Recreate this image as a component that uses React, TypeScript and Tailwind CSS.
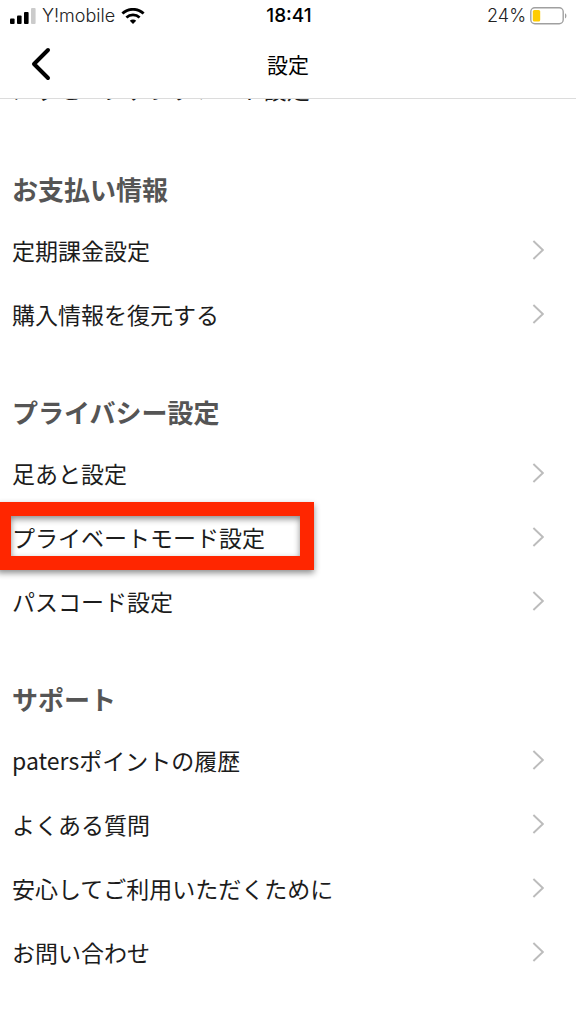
interface SettingItem {
  label: string;
  highlighted?: boolean;
}

interface SettingSection {
  title: string;
  items: SettingItem[];
}

const sections: SettingSection[] = [
  {
    title: "お支払い情報",
    items: [{ label: "定期課金設定" }, { label: "購入情報を復元する" }],
  },
  {
    title: "プライバシー設定",
    items: [
      { label: "足あと設定" },
      { label: "プライベートモード設定", highlighted: true },
      { label: "パスコード設定" },
    ],
  },
  {
    title: "サポート",
    items: [
      { label: "patersポイントの履歴" },
      { label: "よくある質問" },
      { label: "安心してご利用いただくために" },
      { label: "お問い合わせ" },
    ],
  },
];

function SignalIcon() {
  return (
    <svg width="26" height="17" viewBox="0 0 26 17" aria-hidden="true">
      <rect x="0" y="10.5" width="4.6" height="5.5" rx="1" />
      <rect x="7" y="7.5" width="4.6" height="8.5" rx="1" />
      <rect x="14" y="4" width="4.6" height="12" rx="1" />
      <rect x="21" y="0" width="4.6" height="16" rx="1" fill="#cbcbcb" />
    </svg>
  );
}

function WifiIcon() {
  return (
    <svg width="24" height="17" viewBox="0 0 24 17" fill="none" aria-hidden="true">
      <path d="M1.4 5.6a15.2 15.2 0 0 1 21.2 0" stroke="#000" strokeWidth="2.8" />
      <path d="M5.4 9.6a9.6 9.6 0 0 1 13.2 0" stroke="#000" strokeWidth="2.7" />
      <path d="M12 16 8.8 12.8a4.6 4.6 0 0 1 6.4 0z" fill="#000" />
    </svg>
  );
}

function BatteryIcon() {
  return (
    <svg width="38" height="18" viewBox="0 0 38 18" fill="none" aria-hidden="true">
      <rect x="0.8" y="0.8" width="32.4" height="16" rx="4" stroke="#a0a0a0" strokeWidth="1.4" />
      <rect x="2.8" y="3" width="7.4" height="11.6" rx="1.6" fill="#ffcc00" />
      <path d="M35 6.2c1.9.8 1.9 4.4 0 5.2z" fill="#a0a0a0" />
    </svg>
  );
}

function ChevronIcon() {
  return (
    <svg width="12" height="20" viewBox="0 0 12 20" fill="none" aria-hidden="true">
      <path d="M1.4 1l9.4 9-9.4 9" stroke="#bcbcbc" strokeWidth="1.9" />
    </svg>
  );
}

function SettingRow({ label, highlighted }: SettingItem) {
  return (
    <li className="relative">
      <a
        href="#"
        className="flex h-16 items-center justify-between pr-8 pl-3 text-[23px] leading-8 text-[#1c1c1c]"
      >
        <span>{label}</span>
        <ChevronIcon />
      </a>
      {highlighted && (
        <div className="pointer-events-none absolute -top-[3px] -left-[3px] h-[68px] w-[317px] border-[14px] border-[#ff2600] drop-shadow-[0_3px_3px_rgba(0,0,0,0.45)]" />
      )}
    </li>
  );
}

export default function App() {
  return (
    <div className="min-h-screen bg-white font-['Noto_Sans_CJK_JP',sans-serif]">
      <header className="border-b border-[#dcdcdc] bg-white">
        {/* Status bar */}
        <div className="grid h-8 grid-cols-3 items-center pr-2 pl-2.5 font-['Inter','Noto_Sans_CJK_JP',sans-serif] text-[19px] leading-8 text-[#222222]">
          <div className="flex items-center gap-1.5">
            <SignalIcon />
            <span className="text-lg leading-8 font-light">Y!mobile</span>
            <WifiIcon />
          </div>
          <span className="text-center font-medium text-black">18:41</span>
          <div className="flex items-center justify-end gap-1">
            <span className="text-lg leading-8 font-light">24%</span>
            <BatteryIcon />
          </div>
        </div>

        {/* Title bar */}
        <div className="grid h-[66px] grid-cols-3 items-center px-7 pb-0.5">
          <button type="button" aria-label="戻る" className="w-6">
            <svg width="24" height="34" viewBox="0 0 24 34" fill="none" aria-hidden="true">
              <path
                d="M20 3 6 17l14 14"
                stroke="#000"
                strokeWidth="4"
                strokeLinecap="round"
                strokeLinejoin="round"
              />
            </svg>
          </button>
          <h1 className="text-center text-[21px] leading-6 font-normal text-black">設定</h1>
        </div>
      </header>

      {/* The list is scrolled, so its first row is cut off by the header */}
      <main className="overflow-hidden">
        <ul className="-mt-[42px] mb-0.5">
          <SettingRow label="メッセージテンプレート設定" />
        </ul>
        {sections.map((section) => (
          <section key={section.title} className="pt-[46px]">
            <h2 className="mb-[9px] pl-3 text-[26px] leading-10 font-bold text-[#555555]">
              {section.title}
            </h2>
            <ul>
              {section.items.map((item) => (
                <SettingRow key={item.label} {...item} />
              ))}
            </ul>
          </section>
        ))}
      </main>
    </div>
  );
}
